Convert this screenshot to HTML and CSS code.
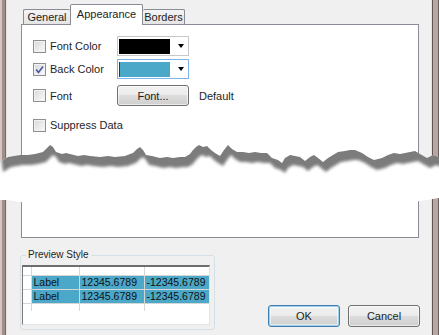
FILE: index.html
```html
<!DOCTYPE html>
<html lang="en">
  <head>
    <meta charset="UTF-8" />
    <title>Style</title>
    <link rel="stylesheet" href="styles.css">
  </head>
  <body>
    <div class="window">
      <div class="frame frame-left"></div>
      <div class="dialog">
        <div class="tabs">
          <div class="tab tab-general">General</div>
          <div class="tab tab-active">Appearance</div>
          <div class="tab tab-borders">Borders</div>
        </div>
        <div class="panel">
          <div class="row row-fontcolor">
            <label class="check"><span class="box"></span>Font Color</label>
            <div class="combo"><span class="swatch swatch-black"></span><span class="arrow"></span></div>
          </div>
          <div class="row row-back">
            <label class="check">
              <span class="box">
                <svg width="11" height="11" viewBox="0 0 11 11"><path d="M2.2 5.4 L4.5 8.4 L9 2.4" fill="none" stroke="#4a5a9c" stroke-width="1.7"/></svg>
              </span>Back Color
            </label>
            <div class="combo combo-focus"><span class="swatch swatch-blue"></span><span class="arrow"></span></div>
          </div>
          <div class="row row-font">
            <label class="check"><span class="box"></span>Font</label>
            <button class="btn btn-font">Font...</button>
            <span class="default">Default</span>
          </div>
          <div class="row row-suppress">
            <label class="check check-wide"><span class="box"></span>Suppress Data</label>
          </div>
        </div>
        <div class="bottom">
          <fieldset class="preview">
            <legend>Preview Style</legend>
            <div class="grid">
              <table>
                <tr class="r-head"><td class="c-hdr"></td><td class="c1"></td><td class="c2"></td><td></td></tr>
                <tr class="r-data"><td class="c-hdr"></td><td class="sel">Label</td><td class="sel">12345.6789</td><td class="sel">-12345.6789</td></tr>
                <tr class="r-data"><td class="c-hdr"></td><td class="sel">Label</td><td class="sel">12345.6789</td><td class="sel">-12345.6789</td></tr>
                <tr class="r-empty"><td class="c-hdr"></td><td></td><td></td><td></td></tr>
              </table>
            </div>
          </fieldset>
          <div class="buttons">
            <button class="btn btn-default">OK</button>
            <button class="btn">Cancel</button>
          </div>
        </div>
      </div>
      <div class="frame frame-right"></div>
    </div>

    <!-- torn paper band laid over the middle of the dialog -->
    <svg class="tear" width="439" height="66" viewBox="0 0 439 66">
      <defs>
        <clipPath id="below">
          <polygon points="0,24 8,19 14,18 20,17 28,17 35,16 43,14 47,10 50,7 53,9 56,14 62,16 66,15 70,16 78,18 84,17 90,18 100,19 108,18 115,19 125,18 130,16 133,15 137,11 140,9 143,12 146,17 152,18 160,20 167,19 173,20 180,19 185,19 190,16 193,12 196,9 199,7 203,9 207,8 211,12 215,15 220,18 224,12 228,7 232,11 237,14 243,14 249,15 255,14 261,15 267,15 272,20 278,22 282,25 285,20 290,17 295,18 300,19 305,23 310,19 314,17 318,20 323,24 328,20 333,17 338,14 345,13 350,12 355,12 362,15 368,19 374,22 382,20 388,17 394,15 400,16 405,15 410,14 415,13 420,16 427,20 433,17 439,19 439,60 420,63 400,66 360,63 300,65 250,63 200,66 150,64 100,66 60,63 20,64 8,62 0,62"/>
        </clipPath>
        <filter id="soft" x="-5%" y="-50%" width="110%" height="200%">
          <feGaussianBlur stdDeviation="1.8"/>
        </filter>
      </defs>
      <g clip-path="url(#below)">
        <rect x="0" y="0" width="439" height="66" fill="#fff"/>
        <polygon filter="url(#soft)" fill="#7c7c7c" transform="translate(3 10)" points="-6,-20 0,24 8,19 14,18 20,17 28,17 35,16 43,14 47,10 50,7 53,9 56,14 62,16 66,15 70,16 78,18 84,17 90,18 100,19 108,18 115,19 125,18 130,16 133,15 137,11 140,9 143,12 146,17 152,18 160,20 167,19 173,20 180,19 185,19 190,16 193,12 196,9 199,7 203,9 207,8 211,12 215,15 220,18 224,12 228,7 232,11 237,14 243,14 249,15 255,14 261,15 267,15 272,20 278,22 282,25 285,20 290,17 295,18 300,19 305,23 310,19 314,17 318,20 323,24 328,20 333,17 338,14 345,13 350,12 355,12 362,15 368,19 374,22 382,20 388,17 394,15 400,16 405,15 410,14 415,13 420,16 427,20 433,17 439,19 445,-20"/>
      </g>
    </svg>
  </body>
</html>
```
FILE: styles.css
```css
* {
    margin: 0;
    padding: 0;
    box-sizing: border-box;
}
body {
    position: relative;
    width: 439px;
    height: 335px;
    overflow: hidden;
    background-color: #f0f0f0;
    font-family: "Liberation Sans", Arial, sans-serif;
    font-size: 11px;
    color: #1e1e1e;
}
.window {
    display: flex;
    height: 335px;
}
/* window frame, left and right */
.frame-left {
    width: 7px;
    background: linear-gradient(to right, #d3c8c6 0 2px, #a38d89 2px 5px, #7c6b68 5px 6px, #e2e2e2 6px 7px);
}
.frame-right {
    width: 8px;
    background: linear-gradient(to right, #e4e4e4 0 1px, #5f5654 1px 2px, #b9a5a1 2px 7px, #6a5d5b 7px 8px);
}
.dialog {
    flex: 1;
    padding-left: 14px;
    padding-right: 12px;
}
/* tabs */
.tabs {
    display: flex;
    align-items: flex-end;
    height: 24px;
    padding-left: 2px;
}
.tab {
    display: flex;
    align-items: center;
    justify-content: center;
    height: 15px;
    border: 1px solid #898c95;
    border-bottom: none;
    border-radius: 2px 2px 0 0;
    background: linear-gradient(#f4f4f4, #e4e4e4);
}
.tab-general {
    width: 47px;
    border-right: none;
}
.tab-borders {
    width: 42px;
    border-left: none;
}
.tab-active {
    position: relative;
    z-index: 1;
    width: 73px;
    height: 21px;
    margin-bottom: -1px;
    padding-bottom: 3px;
    background: #fff;
}
.panel {
    height: 214px;
    border: 1px solid #898c95;
    background-color: #fff;
    padding: 11px 0 0 11px;
}
.row {
    display: flex;
    align-items: center;
    height: 20px;
}
.row-back {
    margin-top: 3px;
}
.row-font {
    margin-top: 6px;
    height: 21px;
}
.row-suppress {
    margin-top: 9px;
}
.check {
    display: flex;
    align-items: center;
    gap: 4px;
    width: 84px;
}
.check-wide {
    width: auto;
}
.box {
    width: 13px;
    height: 13px;
    border: 1px solid #8e8f8f;
    background: linear-gradient(135deg, #d8d8d8, #fbfbfb);
    box-shadow: inset 0 0 0 1px #f2f2f2;
}
.box svg {
    display: block;
}
/* colour combos */
.combo {
    display: flex;
    align-items: center;
    width: 72px;
    height: 20px;
    padding: 1px;
    border: 1px solid #c5c7cc;
    background: #fff;
}
.combo-focus {
    border-color: #7eb4ea;
}
.swatch {
    width: 51px;
    height: 15px;
}
.swatch-black {
    background: #000;
}
.swatch-blue {
    background: #4ba8c8;
    border-left: 1px solid #4b2e2a;
}
.arrow {
    width: 1px;
    height: 0;
    margin-left: 8px;
    border-left: 3px solid transparent;
    border-right: 3px solid transparent;
    border-top: 4px solid #000;
}
/* buttons */
.btn {
    width: 72px;
    height: 22px;
    border: 1px solid #707070;
    border-radius: 3px;
    background: linear-gradient(#f2f2f2 0%, #ebebeb 50%, #dddddd 50%, #cfcfcf 100%);
    box-shadow: inset 0 0 0 1px rgba(255, 255, 255, 0.6);
    font-family: inherit;
    font-size: 11px;
    color: #1e1e1e;
}
.btn-font {
    height: 21px;
}
.btn-default {
    border-color: #3c7fb1;
    box-shadow: inset 0 0 0 1px #9fd2ee, inset 0 0 0 2px rgba(255, 255, 255, 0.5);
}
.default {
    margin-left: 10px;
}
/* preview group */
.bottom {
    display: flex;
    align-items: flex-end;
    margin-top: 11px;
}
.preview {
    width: 195px;
    height: 81px;
    margin-left: -1px;
    padding: 4px 4px 0 1px;
    border: 1px solid #d5dfe5;
    border-radius: 3px;
}
.preview legend {
    margin-left: 4px;
    padding: 0 2px;
    font-size: 10px;
    line-height: 12px;
}
.grid {
    width: 188px;
    height: 60px;
    border: 1px solid;
    border-color: #6e6e6e #e3e3e3 #e3e3e3 #7a7a7a;
    border-top-width: 2px;
    background: #fff;
}
.grid table {
    width: 100%;
    border-collapse: collapse;
    border-style: hidden;
    font-size: 10.5px;
    color: #111;
}
.grid td {
    border: 1px solid #d6d6d6;
    padding: 0 2px;
    line-height: 13px;
    white-space: nowrap;
}
.c-hdr {
    width: 8px;
}
.c1 {
    width: 48px;
}
.c2 {
    width: 65px;
}
.r-head td {
    height: 8px;
}
.r-data td {
    height: 14px;
}
.r-empty td {
    height: 8px;
}
.grid td.sel {
    background: #4ba8c8;
}
.buttons {
    display: flex;
    gap: 8px;
    margin-left: auto;
    margin-right: -1px;
    margin-bottom: 3px;
}
.tear {
    position: absolute;
    top: 138px;
    left: 0;
}
```
